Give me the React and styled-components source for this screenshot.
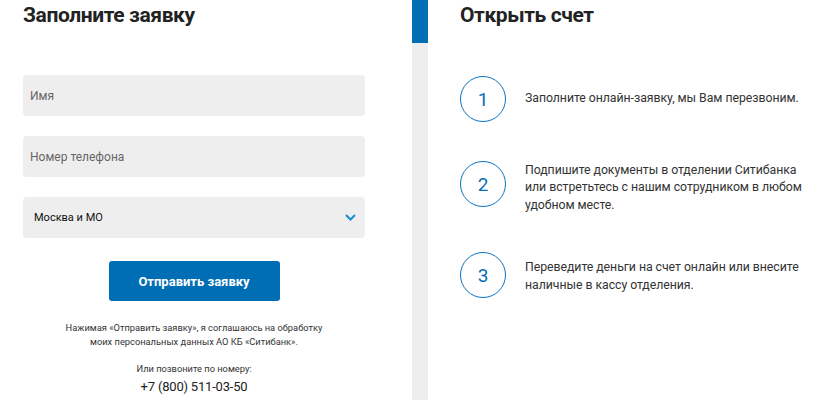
import React from 'react';
import styled, { createGlobalStyle } from 'styled-components';

const GlobalStyle = createGlobalStyle`
  html, body {
    margin: 0;
    padding: 0;
    background: #fff;
  }
  body {
    font-family: 'Roboto', 'Liberation Sans', sans-serif;
    color: #333;
  }
`;

const Page = styled.div`
  display: flex;
  width: 825px;
  height: 400px;
  overflow: hidden;
`;

const FormColumn = styled.div`
  width: 389px;
  padding-left: 23px;
  display: flex;
  flex-direction: column;
`;

const Title = styled.h2`
  margin: 0;
  font-size: 21px;
  line-height: 30px;
  font-weight: 700;
  color: #222;
  letter-spacing: -0.4px;
`;

const Fields = styled.div`
  width: 342px;
  margin-top: 45px;
  display: flex;
  flex-direction: column;
  gap: 20px;
`;

const Field = styled.input`
  box-sizing: border-box;
  height: 41px;
  width: 100%;
  border: none;
  border-radius: 4px;
  background: #eeeeee;
  padding: 0 7px;
  font-family: inherit;
  font-size: 12px;
  color: #333;
  outline: none;
  &::placeholder {
    color: #666;
  }
`;

const SelectBox = styled.div`
  box-sizing: border-box;
  height: 41px;
  border-radius: 4px;
  background: #eeeeee;
  padding: 0 9px 0 11px;
  display: flex;
  align-items: center;
  justify-content: space-between;
  font-size: 11px;
  color: #111;
`;

const Actions = styled.div`
  width: 342px;
  display: flex;
  flex-direction: column;
  align-items: center;
  margin-top: 23px;
`;

const SubmitButton = styled.button`
  width: 171px;
  height: 40px;
  border: none;
  border-radius: 3px;
  background: #006eb4;
  color: #fff;
  font-family: inherit;
  font-size: 13px;
  font-weight: 700;
  cursor: pointer;
`;

const Consent = styled.p`
  margin: 20px 0 0;
  font-size: 9.3px;
  line-height: 14px;
  text-align: center;
  color: #333;
`;

const CallLabel = styled.div`
  margin-top: 13px;
  font-size: 9.3px;
  line-height: 14px;
  color: #333;
`;

const Phone = styled.div`
  margin-top: 2px;
  font-size: 13px;
  line-height: 18px;
  letter-spacing: -0.2px;
  color: #222;
`;

const Stripe = styled.div`
  width: 16px;
  height: 100%;
  background: #eeeeee;
  position: relative;
  flex-shrink: 0;
`;

const StripeThumb = styled.div`
  position: absolute;
  left: 0;
  top: 0;
  width: 100%;
  height: 43px;
  background: #006eb4;
`;

const StepsColumn = styled.div`
  padding-left: 32px;
  display: flex;
  flex-direction: column;
`;

const Steps = styled.ol`
  list-style: none;
  margin: 42px 0 0;
  padding: 0;
  display: flex;
  flex-direction: column;
`;

const Step = styled.li`
  display: flex;
  align-items: center;
  gap: 19px;
  height: ${(p) => p.$h}px;
`;

const Circle = styled.div`
  box-sizing: border-box;
  width: 46px;
  height: 46px;
  border: 1px solid #0a72c0;
  border-radius: 50%;
  display: flex;
  align-items: center;
  justify-content: center;
  color: #0a6db5;
  font-size: 19px;
  flex-shrink: 0;
`;

const StepText = styled.p`
  margin: ${(p) => p.$shift}px 0 0;
  font-size: 12.3px;
  line-height: 17.5px;
  letter-spacing: -0.05px;
  color: #333;
  white-space: nowrap;
`;

const Chevron = () => (
  <svg width="11" height="7" viewBox="0 0 11 7">
    <path d="M1 1l4.5 4.5L10 1" fill="none" stroke="#1b8bd3" strokeWidth="2" />
  </svg>
);

const steps = [
  { n: 1, h: 54, shift: 0, lines: ['Заполните онлайн-заявку, мы Вам перезвоним.'] },
  {
    n: 2,
    h: 116,
    shift: 8,
    lines: ['Подпишите документы в отделении Ситибанка', 'или встретьтесь с нашим сотрудником в любом', 'удобном месте.'],
  },
  { n: 3, h: 66, shift: 3, lines: ['Переведите деньги на счет онлайн или внесите', 'наличные в кассу отделения.'] },
];

export default function App() {
  return (
    <>
      <GlobalStyle />
      <Page>
        <FormColumn>
          <Title>Заполните заявку</Title>
          <Fields>
            <Field placeholder="Имя" />
            <Field placeholder="Номер телефона" />
            <SelectBox>
              <span>Москва и МО</span>
              <Chevron />
            </SelectBox>
          </Fields>
          <Actions>
            <SubmitButton>Отправить заявку</SubmitButton>
            <Consent>
              Нажимая «Отправить заявку», я соглашаюсь на обработку
              <br />
              моих персональных данных АО КБ «Ситибанк».
            </Consent>
            <CallLabel>Или позвоните по номеру:</CallLabel>
            <Phone>+7 (800) 511-03-50</Phone>
          </Actions>
        </FormColumn>
        <Stripe>
          <StripeThumb />
        </Stripe>
        <StepsColumn>
          <Title>Открыть счет</Title>
          <Steps>
            {steps.map((s) => (
              <Step key={s.n} $h={s.h}>
                <Circle>{s.n}</Circle>
                <StepText $shift={s.shift}>
                  {s.lines.map((line, i) => (
                    <React.Fragment key={i}>
                      {i > 0 && <br />}
                      {line}
                    </React.Fragment>
                  ))}
                </StepText>
              </Step>
            ))}
          </Steps>
        </StepsColumn>
      </Page>
    </>
  );
}
